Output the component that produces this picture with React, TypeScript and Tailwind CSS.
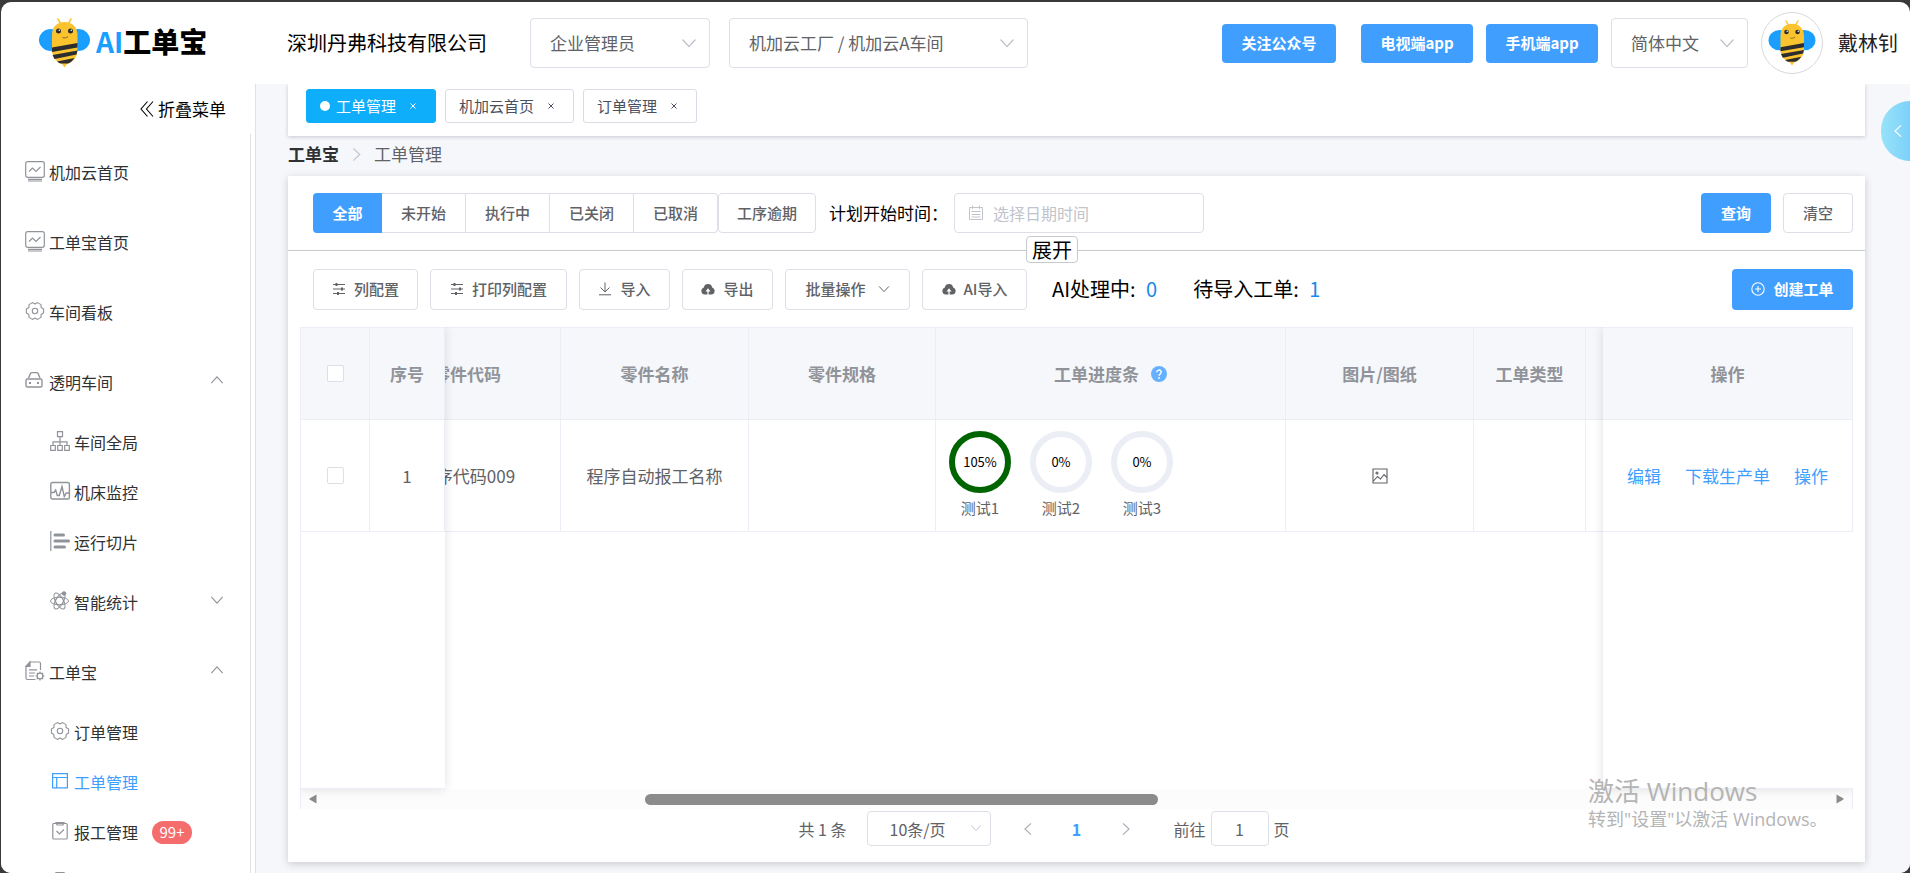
import React from "react";

type IconProps = { className?: string };

const Chevron = ({ className = "", dir = "down" }: IconProps & { dir?: "down" | "up" | "left" | "right" }) => {
  const paths = {
    down: "M1.5 4.5 8 11.5l6.5-7",
    up: "M1.5 11.5 8 4.5l6.5 7",
    left: "M11.5 1.5 4.5 8l7 6.5",
    right: "M4.5 1.5 11.5 8l-7 6.5",
  };
  return (
    <svg viewBox="0 0 16 16" fill="none" stroke="currentColor" strokeWidth="1.3" className={className}>
      <path d={paths[dir]} />
    </svg>
  );
};

const Bee = ({ className = "" }: IconProps) => (
  <svg viewBox="0 0 51 50" className={className}>
    <ellipse cx="12" cy="22" rx="12" ry="11" fill="#1a9fff" />
    <ellipse cx="39" cy="22" rx="12" ry="11" fill="#1a9fff" />
    <path d="M19 1l3 5M32 1l-3 5" stroke="#fbc42f" strokeWidth="1.5" strokeLinecap="round" />
    <path d="M13 17C13 9 18 4 25.500 4S38.500 9 38.500 17v15c0 8-6 13-10.500 14l-2.500 3.500L23 46c-4-1-10-6-10-14z" fill="#fbc42f" />
    <path d="M13 29.500l25.500-4.500v4.500L13 34zM13.500 37l25-4.500-1 4-22 4.500zM18 43.500l17.500-3.500c-2 3-4 4.500-6.500 5.500h-6.500c-2 0-3-.8-4.500-2z" fill="#2d2d2f" />
    <circle cx="19.500" cy="13" r="2.500" fill="#2d2d2f" />
    <circle cx="31.500" cy="13" r="2.500" fill="#2d2d2f" />
    <circle cx="20.300" cy="12.200" r=".8" fill="#fff" />
    <circle cx="32.300" cy="12.200" r=".8" fill="#fff" />
    <path d="M23.500 19.500c2 .8 4 .3 5.500-1" fill="none" stroke="#6b531a" strokeWidth=".8" />
  </svg>
);

const svgBase = { viewBox: "0 0 20 20", fill: "none", stroke: "currentColor", strokeWidth: 1.2 };

const MonitorIcon = ({ className }: IconProps) => (
  <svg {...svgBase} className={className}>
    <rect x=".7" y=".7" width="18.600" height="15.600" rx="2" />
    <path d="M4 10.500l3.500-3.500 3.500 3.500 4.500-4.500M3 18.300h14M3 20h14" />
  </svg>
);

const GearIcon = ({ className }: IconProps) => (
  <svg {...svgBase} strokeWidth={1.1} strokeLinejoin="round" className={className}>
    <path d="M18.600 8v4l-2.500 1.500-.1 2.900-3.400 2L10 17l-2.600 1.400-3.400-2-.1-2.900L1.400 12V8l2.500-1.500.1-2.900 3.400-2L10 3l2.600-1.400 3.400 2 .1 2.900z" />
    <circle cx="10" cy="10" r="2.700" />
  </svg>
);

const CarIcon = ({ className }: IconProps) => (
  <svg {...svgBase} strokeWidth={1.4} className={className}>
    <path d="M3.500 7l2-4.500q.4-.9 1.300-.9h5q.9 0 1.300.9L15 7" />
    <rect x="1" y="8" width="16" height="8" rx="1.500" />
    <path d="M4 12h2M12 12h2" strokeWidth="2" />
  </svg>
);

const TreeIcon = ({ className }: IconProps) => (
  <svg {...svgBase} className={className}>
    <path d="M7.500.7h5v5h-5zM.7 14.500h4.600v4.800H.7zM7.700 14.500h4.600v4.800H7.700zM14.700 14.500h4.600v4.800h-4.600zM10 5.700v8.800M3 14.500v-3.700h14v3.700" />
  </svg>
);

const PulseIcon = ({ className }: IconProps) => (
  <svg {...svgBase} strokeWidth={1.4} className={className}>
    <rect x=".8" y="1.500" width="18.600" height="16.500" rx="1.500" />
    <path d="M1 11.500h3l1.700-2.500 1.600 5.500h2l2.700-9 2.300 10 2-3.500H19" />
  </svg>
);

const BarsIcon = ({ className }: IconProps) => (
  <svg {...svgBase} className={className}>
    <path d="M.8 0v20" />
    <path d="M5 4h8.500M5 10h13.500M5 16h9.500" strokeWidth="3" strokeLinecap="round" />
  </svg>
);

const AtomIcon = ({ className }: IconProps) => (
  <svg {...svgBase} strokeWidth={1} className={className}>
    <circle cx="9.500" cy="10" r="4" />
    <ellipse cx="9.500" cy="10" rx="9" ry="3.800" />
    <ellipse cx="9.500" cy="10" rx="9" ry="3.800" transform="rotate(60 9.5 10)" />
    <ellipse cx="9.500" cy="10" rx="9" ry="3.800" transform="rotate(120 9.5 10)" />
    <circle cx="14" cy="2.500" r="1.800" fill="currentColor" />
  </svg>
);

const DocGearIcon = ({ className }: IconProps) => (
  <svg {...svgBase} className={className}>
    <path d="M10.500 18.500H2.200q-1.200 0-1.200-1.200V5.500L5 1h9q1.500 0 1.500 1.500V9M4 8.800h8M4 12h6M4 15h5" />
    <path d="M1 5.500h4V1z" fill="currentColor" />
    <circle cx="15" cy="15" r="2.900" />
    <path d="M15 10.500v1.700M15 17.800v1.700M10.500 15h1.700M17.800 15h1.700M11.800 11.800L13 13M17 17l1.200 1.200M18.200 11.800L17 13M13 17l-1.200 1.200" />
  </svg>
);

const LayoutIcon = ({ className }: IconProps) => (
  <svg {...svgBase} className={className}>
    <path d="M2.600 2.600h14.800v14.300H2.600zM2.600 6.500h14.800M6.700 6.500v10.400" />
  </svg>
);

const ClipboardIcon = ({ className }: IconProps) => (
  <svg {...svgBase} className={className}>
    <rect x="2.800" y="2.500" width="14.400" height="15.500" rx="1" />
    <path d="M6 1.500h8l-1 2.500H7zM6.500 10l3 3 4.500-4.500" />
  </svg>
);

const SlidersIcon = () => (
  <svg viewBox="0 0 14 14" fill="none" stroke="currentColor" strokeWidth="1.1" className="size-[14px]">
    <path d="M1 2.500h12M1 7h12M1 11.500h12" />
    <path d="M4.500 1v3M10 5.500v3M6 10v3" strokeWidth="2" />
  </svg>
);

const DownloadIcon = () => (
  <svg viewBox="0 0 14 14" fill="none" stroke="currentColor" strokeWidth="1" className="size-[14px]">
    <path d="M7 .5v9.500M2.500 5.500L7 10l4.500-4.500M1 12.800h12" />
  </svg>
);

const CloudIcon = () => (
  <svg viewBox="0 0 14 14" className="size-[14px]">
    <path
      d="M3.800 12.500a3.600 3.600 0 0 1-1-7A4.300 4.300 0 0 1 11.200 5.500a3.600 3.600 0 0 1-1 7H7.600V9.500H9.500L7 6.300 4.500 9.500h1.900v3z"
      fill="currentColor"
    />
  </svg>
);

const PlusCircleIcon = () => (
  <svg viewBox="0 0 14 14" fill="none" stroke="currentColor" strokeWidth="1.1" className="size-[14px]">
    <circle cx="7" cy="7" r="6.200" />
    <path d="M7 4v6M4 7h6" />
  </svg>
);

const CalendarIcon = ({ className }: IconProps) => (
  <svg viewBox="0 0 16 16" fill="none" stroke="currentColor" strokeWidth="1" className={className}>
    <path d="M1.500 2.500h13v12h-13zM4.500.5v3.500M11.500.5v3.500M3.500 6.500h9M3.500 9.500h9M3.500 12h9" />
  </svg>
);

const PictureIcon = () => (
  <svg viewBox="0 0 16 16" fill="none" stroke="currentColor" strokeWidth="1.1" className="size-4">
    <path d="M1 1h14v14H1zM1.500 13l4-4.500L8.500 11 12 6.500l3 3" />
    <circle cx="5" cy="5" r="1" />
  </svg>
);

type MenuEntry = {
  label?: string;
  icon: (props: IconProps) => React.ReactElement;
  sub?: boolean;
  group?: "open" | "closed";
  active?: boolean;
  badge?: string;
};

const menu: MenuEntry[] = [
  { label: "机加云首页", icon: MonitorIcon },
  { label: "工单宝首页", icon: MonitorIcon },
  { label: "车间看板", icon: GearIcon },
  { label: "透明车间", icon: CarIcon, group: "open" },
  { label: "车间全局", icon: TreeIcon, sub: true },
  { label: "机床监控", icon: PulseIcon, sub: true },
  { label: "运行切片", icon: BarsIcon, sub: true },
  { label: "智能统计", icon: AtomIcon, sub: true, group: "closed" },
  { label: "工单宝", icon: DocGearIcon, group: "open" },
  { label: "订单管理", icon: GearIcon, sub: true },
  { label: "工单管理", icon: LayoutIcon, sub: true, active: true },
  { label: "报工管理", icon: ClipboardIcon, sub: true, badge: "99+" },
  { icon: ClipboardIcon, sub: true },
];

const tabs = [
  { label: "工单管理", active: true },
  { label: "机加云首页", active: false },
  { label: "订单管理", active: false },
];

const statuses = ["全部", "未开始", "执行中", "已关闭", "已取消"];

const progress = [
  { name: "测试1", value: 105 },
  { name: "测试2", value: 0 },
  { name: "测试3", value: 0 },
];

const outlineButton =
  "flex items-center justify-center gap-2 rounded border border-[#dcdfe6] bg-white text-[15px] font-medium text-[#606266]";
const primaryButton = "flex items-center justify-center gap-2 rounded bg-[#409eff] text-[15px] font-bold text-white";

function SelectBox({ label, value, className }: { label: string; value: string; className: string }) {
  return (
    <div className={`relative shrink-0 ${className}`}>
      <select
        aria-label={label}
        className="size-full appearance-none rounded border border-[#dcdfe6] bg-white pl-[19px] text-[17px] text-[#606266]"
      >
        <option>{value}</option>
      </select>
      <Chevron className="pointer-events-none absolute top-1/2 right-[13px] size-4 -translate-y-1/2 text-[#c0c4cc]" />
    </div>
  );
}

function Header() {
  return (
    <header className="flex h-[82px] shrink-0 items-center pr-3 pl-[38px]">
      <a href="#home" className="flex w-[248px] shrink-0 items-center">
        <Bee className="h-[50px] w-[51px]" />
        <span className="mb-1 ml-[6px] text-[28px] leading-8 font-black whitespace-nowrap text-black">
          <span className="font-bold text-[#1a9fff]">AI</span>工单宝
        </span>
      </a>
      <span className="text-[20px] text-black">深圳丹弗科技有限公司</span>
      <SelectBox label="角色" value="企业管理员" className="ml-[43px] h-[50px] w-[180px]" />
      <SelectBox label="车间" value="机加云工厂 / 机加云A车间" className="ml-[19px] h-[50px] w-[299px]" />
      <div className="ml-auto flex shrink-0 items-center gap-[13px]">
        <button className={`${primaryButton} mr-3 h-[39px] w-[114px]`}>关注公众号</button>
        <button className={`${primaryButton} h-[39px] w-[112px]`}>电视端app</button>
        <button className={`${primaryButton} h-[39px] w-[112px]`}>手机端app</button>
        <SelectBox label="语言" value="简体中文" className="h-[50px] w-[137px]" />
        <div className="flex size-[62px] items-center justify-center rounded-full border border-[#d8d8dc]">
          <Bee className="h-[46px] w-[48px]" />
        </div>
        <span className="ml-[2px] text-[20px] text-[#222]">戴林钊</span>
      </div>
    </header>
  );
}

function Sidebar() {
  return (
    <aside className="flex w-[255px] shrink-0 flex-col border-r border-[#dfe1e6] bg-white">
      <button className="flex h-[50px] shrink-0 items-center gap-1 self-end pr-[29px] text-[17px] text-black">
        <svg viewBox="0 0 14 16" fill="none" stroke="currentColor" strokeWidth="1.1" className="h-4 w-[14px]">
          <path d="M7.500.5L1 8l6.500 7.500M13 .5L6.500 8l6.500 7.500" />
        </svg>
        折叠菜单
      </button>
      <nav className="mr-1 min-h-0 flex-1 overflow-hidden border-r border-[#dfe1e6] pt-[3px]">
        {menu.map(({ label, icon: Icon, sub, group, active, badge }, index) => (
          <a
            key={index}
            href="#menu"
            className={`flex items-center gap-1 pr-[26px] text-[16px] ${sub ? "pl-[49px]" : "pl-6"} ${
              sub && !group ? "h-[50px]" : "h-[70px]"
            } ${active ? "text-[#409eff]" : "text-[#303133]"}`}
          >
            <Icon className={`mb-[2px] size-5 shrink-0 overflow-visible ${active ? "" : "text-[#909399]"}`} />
            {label}
            {badge && (
              <span className="ml-[10px] flex h-[23px] w-10 items-center justify-center rounded-full bg-[#f56c6c] text-[15px] text-white">
                {badge}
              </span>
            )}
            {group && (
              <Chevron dir={group === "open" ? "up" : "down"} className="mb-1 ml-auto size-[14px] text-[#909399]" />
            )}
          </a>
        ))}
      </nav>
    </aside>
  );
}

function TabBar() {
  return (
    <div className="flex shrink-0 gap-[9px] bg-white pt-[5px] pb-[13px] pl-[18px] shadow-[0_1px_4px_rgba(0,21,41,0.2)]">
      {tabs.map(({ label, active }) => (
        <a
          key={label}
          href="#tab"
          className={`flex h-[34px] items-center rounded-[3px] border pr-[18px] pl-[13px] text-[15px] ${
            active ? "border-[#0eaefb] bg-[#0eaefb] text-white" : "border-[#d8dce5] text-[#495060]"
          }`}
        >
          {active && <span className="mr-[6px] size-[10px] rounded-full bg-white" />}
          {label}
          <svg viewBox="0 0 8 8" stroke="currentColor" strokeWidth="1" className="ml-[13px] size-[8px]">
            <path d="M1.500 1.500l5 5M6.500 1.500l-5 5" />
          </svg>
        </a>
      ))}
    </div>
  );
}

function FilterBar() {
  return (
    <div className="relative flex h-[75px] shrink-0 items-center border-b border-[#c8c9cc] pr-3 pl-[25px]">
      <div className="flex">
        {statuses.map((status, i) => (
          <button
            key={status}
            className={
              i === 0
                ? "h-10 w-[69px] rounded-l bg-[#409eff] text-[15px] font-bold text-white"
                : "h-10 w-[84px] border-y border-r border-[#dcdfe6] bg-white text-[15px] font-medium text-[#606266] last:rounded-r"
            }
          >
            {status}
          </button>
        ))}
      </div>
      <button className={`${outlineButton} h-10 w-[98px]`}>工序逾期</button>
      <label htmlFor="plan-start" className="ml-[13px] text-[17px] text-black">
        计划开始时间：
      </label>
      <div className="relative ml-[6px] text-[#c0c4cc]">
        <CalendarIcon className="absolute top-3 left-[14px] size-4" />
        <input
          id="plan-start"
          placeholder="选择日期时间"
          className="h-10 w-[250px] rounded border border-[#dcdfe6] pl-[38px] text-[16px] text-[#606266] placeholder:text-[#c0c4cc]"
        />
      </div>
      <div className="ml-auto flex gap-3">
        <button className={`${primaryButton} h-10 w-[70px]`}>查询</button>
        <button className={`${outlineButton} h-10 w-[70px]`}>清空</button>
      </div>
      <button className="absolute -bottom-[13px] left-[738px] h-[27px] w-[52px] rounded border border-[#c8c9cc] bg-white text-[20px] leading-6 text-black">
        展开
      </button>
    </div>
  );
}

function Toolbar() {
  return (
    <div className="flex h-[76px] shrink-0 items-center gap-3 pr-3 pl-[25px]">
      <button className={`${outlineButton} h-[41px] w-[105px]`}>
        <SlidersIcon />
        列配置
      </button>
      <button className={`${outlineButton} h-[41px] w-[137px]`}>
        <SlidersIcon />
        打印列配置
      </button>
      <button className={`${outlineButton} h-[41px] w-[91px]`}>
        <DownloadIcon />
        导入
      </button>
      <button className={`${outlineButton} h-[41px] w-[91px]`}>
        <CloudIcon />
        导出
      </button>
      <button className={`${outlineButton} h-[41px] w-[125px]`}>
        批量操作
        <Chevron className="ml-1 size-[12px]" />
      </button>
      <button className={`${outlineButton} h-[41px] w-[105px]`}>
        <CloudIcon />
        AI导入
      </button>
      <div className="ml-[13px] flex gap-9 text-[20px] text-black">
        <span>
          AI处理中: <span className="ml-[6px] text-[#1989e8]">0</span>
        </span>
        <span>
          待导入工单: <span className="ml-[6px] text-[#1989e8]">1</span>
        </span>
      </div>
      <button className={`${primaryButton} ml-auto h-[41px] w-[121px]`}>
        <PlusCircleIcon />
        创建工单
      </button>
    </div>
  );
}

function ProgressRing({ name, value }: { name: string; value: number }) {
  return (
    <div className="flex flex-col items-center">
      <div
        className={`flex size-[62px] items-center justify-center rounded-full border-[6px] text-[13px] text-black ${
          value > 0 ? "border-[#006400]" : "border-[#ebeef5]"
        }`}
      >
        {value}%
      </div>
      <span className="mt-[3px] text-[15px] leading-6">{name}</span>
    </div>
  );
}

function OrderTable() {
  const cell = "border-r border-b border-[#ebeef5]";
  const checkbox = "block mx-auto size-[17px] appearance-none rounded-[2px] border border-[#dcdfe6] bg-white";
  return (
    <div className="relative mx-3 flex min-h-0 flex-1 flex-col overflow-hidden">
      <div className="min-h-0 flex-1 border-t border-l border-[#ebeef5]">
        <table className="w-full table-fixed border-separate border-spacing-0 text-center text-[17px] text-[#606266]">
          <colgroup>
            <col className="w-[69px]" />
            <col className="w-[75px]" />
            <col className="w-[116px]" />
            <col className="w-[188px]" />
            <col className="w-[187px]" />
            <col />
            <col className="w-[188px]" />
            <col className="w-[112px]" />
            <col className="w-[17px]" />
            <col className="w-[250px]" />
          </colgroup>
          <thead className="bg-[#f5f7fa] text-[#909399]">
            <tr className="h-[92px]">
              <th className={cell}>
                <input type="checkbox" aria-label="全选" className={checkbox} />
              </th>
              <th className={cell}>序号</th>
              <th className={`${cell} overflow-hidden`}>
                <div className="-ml-[72px] w-[188px]">零件代码</div>
              </th>
              <th className={cell}>零件名称</th>
              <th className={cell}>零件规格</th>
              <th className={cell}>
                <div className="flex items-center justify-center gap-3">
                  工单进度条
                  <svg viewBox="0 0 16 16" className="size-4">
                    <circle cx="8" cy="8" r="8" fill="#66b1ff" />
                    <path d="M5.800 6.300a2.200 2.200 0 1 1 3.300 1.900q-1.100.6-1.100 1.600" fill="none" stroke="#fff" strokeWidth="1.4" />
                    <circle cx="8" cy="12" r=".9" fill="#fff" />
                  </svg>
                </div>
              </th>
              <th className={cell}>图片/图纸</th>
              <th className={cell}>工单类型</th>
              <th className="border-b border-[#ebeef5]" />
              <th className={cell}>操作</th>
            </tr>
          </thead>
          <tbody>
            <tr className="h-[112px]">
              <td className={cell}>
                <input type="checkbox" aria-label="选择第 1 行" className={checkbox} />
              </td>
              <td className={cell}>1</td>
              <td className={`${cell} overflow-hidden`}>
                <div className="-ml-[72px] w-[188px] whitespace-nowrap">程序代码009</div>
              </td>
              <td className={cell}>程序自动报工名称</td>
              <td className={cell} />
              <td className={cell}>
                <div className="flex gap-[19px] pl-[13px]">
                  {progress.map((item) => (
                    <ProgressRing key={item.name} name={item.name} value={item.value} />
                  ))}
                </div>
              </td>
              <td className={cell}>
                <div className="flex justify-center">
                  <PictureIcon />
                </div>
              </td>
              <td className={cell} />
              <td className="border-b border-[#ebeef5]" />
              <td className={cell}>
                <div className="flex justify-center gap-6 text-[#409eff]">
                  <a href="#edit">编辑</a>
                  <a href="#download">下载生产单</a>
                  <a href="#more">操作</a>
                </div>
              </td>
            </tr>
          </tbody>
        </table>
      </div>

      {/* horizontal scroll track */}
      <div className="flex h-5 shrink-0 items-center justify-between border-x border-[#ebeef5] bg-[#fcfcfc] px-2 text-[#8b8b8b]">
        <svg viewBox="0 0 8 10" className="h-[10px] w-2">
          <path d="M7.500.5v9L.5 5.500v-1z" fill="currentColor" />
        </svg>
        <div className="mr-auto ml-[21.4%] h-[11px] w-[33.4%] rounded-full bg-[#8b8b8b]" />
        <svg viewBox="0 0 8 10" className="h-[10px] w-2">
          <path d="M.5.5v9l7-4v-1z" fill="currentColor" />
        </svg>
      </div>

      {/* shadows cast by the fixed columns */}
      <div className="pointer-events-none absolute top-0 bottom-5 left-0 w-[145px] border-b border-[#ebeef5] shadow-[0_0_10px_rgba(0,0,0,0.12)]" />
      <div className="pointer-events-none absolute top-0 right-0 bottom-5 w-[250px] border-b border-[#ebeef5] shadow-[0_0_10px_rgba(0,0,0,0.12)]" />
    </div>
  );
}

function Pagination() {
  return (
    <div className="flex shrink-0 items-center justify-center pt-[2px] pr-[65px] pb-4 text-[16px] text-[#606266]">
      <span>共 1 条</span>
      <div className="relative ml-5 h-[35px] w-[124px]">
        <select
          aria-label="每页条数"
          className="size-full appearance-none rounded border border-[#dcdfe6] bg-white pl-[22px] text-[16px] text-[#606266]"
        >
          <option>10条/页</option>
        </select>
        <Chevron className="pointer-events-none absolute top-[11px] right-[9px] size-[12px] text-[#c0c4cc]" />
      </div>
      <button aria-label="上一页" className="ml-[30px] text-[#a8abb2]">
        <Chevron dir="left" className="size-[14px]" />
      </button>
      <span className="w-[84px] text-center font-bold text-[#409eff]">1</span>
      <button aria-label="下一页" className="text-[#a8abb2]">
        <Chevron dir="right" className="size-[14px]" />
      </button>
      <label htmlFor="goto-page" className="ml-[41px]">
        前往
      </label>
      <input
        id="goto-page"
        defaultValue="1"
        className="mx-[5px] h-[35px] w-[58px] rounded border border-[#dcdfe6] text-center text-[16px]"
      />
      <span>页</span>
    </div>
  );
}

export default function App() {
  return (
    <div className="h-screen overflow-hidden bg-[#3a3a3a] pt-[2px] pl-px font-['Noto_Sans_CJK_SC',sans-serif]">
      <div className="relative flex h-full flex-col overflow-hidden rounded-[10px] bg-white">
        <Header />
        <div className="flex min-h-0 flex-1">
          <Sidebar />
          <main className="flex min-w-0 flex-1 flex-col overflow-hidden bg-[#f5f7fb] pr-[45px] pb-[11px] pl-8">
            <TabBar />
            <div className="flex h-10 shrink-0 items-center gap-[10px] pb-1 text-[17px]">
              <a href="#orders" className="font-bold text-[#303133]">
                工单宝
              </a>
              <Chevron dir="right" className="size-[15px] text-[#c0c4cc]" />
              <span className="text-[#606266]">工单管理</span>
            </div>
            <section className="flex min-h-0 flex-1 flex-col bg-white shadow-[0_2px_8px_rgba(0,0,0,0.18)]">
              <FilterBar />
              <Toolbar />
              <OrderTable />
              <Pagination />
            </section>
          </main>
        </div>

        <button
          aria-label="展开侧栏"
          className="absolute top-[99px] right-0 flex h-[60px] w-[29px] items-center justify-center rounded-l-full bg-gradient-to-r from-[#97e3f8] to-[#7dd0fb] pl-1 text-white"
        >
          <Chevron dir="left" className="size-[14px]" />
        </button>

        <div className="pointer-events-none absolute right-[76px] bottom-[42px] w-[246px] font-['Open_Sans','Noto_Sans_CJK_SC',sans-serif] whitespace-nowrap text-[#b4b4b4]">
          <p className="text-[26px] leading-8">激活 Windows</p>
          <p className="text-[18px] leading-6">转到"设置"以激活 Windows。</p>
        </div>
      </div>
    </div>
  );
}
